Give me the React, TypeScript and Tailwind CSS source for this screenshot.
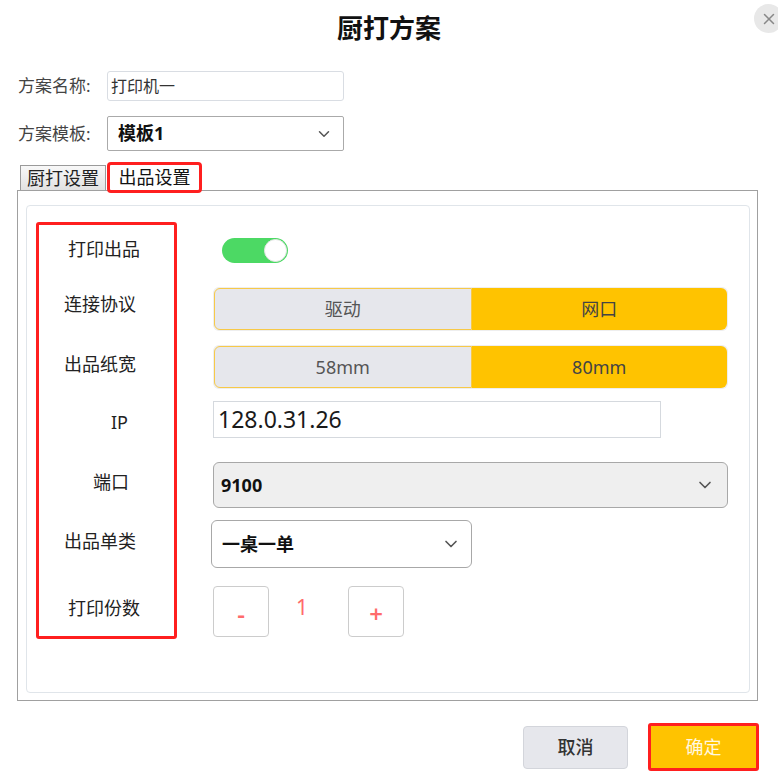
import React, { useState } from 'react';
import { ChevronDown, X } from 'lucide-react';

const font = { fontFamily: '"Noto Sans", "Noto Sans CJK SC", sans-serif' };

// label rows inside the red box: top margin and left offset
const labels = [
  { text: '打印出品', mt: 'mt-[12px]', pl: 'pl-[29px]' },
  { text: '连接协议', mt: 'mt-[31px]', pl: 'pl-[25px]' },
  { text: '出品纸宽', mt: 'mt-[36px]', pl: 'pl-[25px]' },
  { text: 'IP', mt: 'mt-[34px]', pl: 'pl-[72px]' },
  { text: '端口', mt: 'mt-[36px]', pl: 'pl-[54px]' },
  { text: '出品单类', mt: 'mt-[35px]', pl: 'pl-[25px]' },
  { text: '打印份数', mt: 'mt-[43px]', pl: 'pl-[29px]' },
];

function Segmented({ left, right, value, onChange, className = '' }: {
  left: string;
  right: string;
  value: string;
  onChange: (v: string) => void;
  className?: string;
}) {
  return (
    <div className={`flex w-[515px] h-[44px] bg-[#eeeeee] p-[1px] rounded-[6px] ${className}`}>
      {[left, right].map((opt, i) => (
        <button
          key={opt}
          type="button"
          onClick={() => onChange(opt)}
          className={`flex-1 flex items-center justify-center text-[18px] ${
            i === 0 ? 'rounded-l-[6px]' : 'rounded-r-[6px]'
          } ${
            value === opt
              ? 'bg-[#ffc300] text-[#444]'
              : 'bg-[#e6e7ec] text-[#555] border border-[#f7c948]'
          }`}
        >
          {opt}
        </button>
      ))}
    </div>
  );
}

export default function App() {
  const [enabled, setEnabled] = useState(true);
  const [protocol, setProtocol] = useState('网口');
  const [width, setWidth] = useState('80mm');
  const [count, setCount] = useState(1);

  return (
    <div className="relative w-[778px] h-[783px] bg-white overflow-hidden text-[#333]" style={font}>
      {/* Header */}
      <div className="h-[56px] flex items-center justify-center">
        <h1 className="text-[26px] font-bold text-[#111]">厨打方案</h1>
      </div>
      <button
        type="button"
        className="absolute top-[4px] right-[-5px] w-[29px] h-[29px] rounded-full bg-[#e8e8e8] flex items-center justify-center text-[#888]"
        aria-label="close"
      >
        <X size={18} strokeWidth={2} />
      </button>

      {/* Scheme fields */}
      <div className="mt-[15px] pl-[18px] flex items-center">
        <span className="w-[89px] text-[17px] text-[#444]">方案名称:</span>
        <div className="w-[237px] h-[30px] border border-[#d9dde3] rounded-[3px] flex items-center px-[3px] text-[16px] text-[#333]">
          打印机一
        </div>
      </div>
      <div className="mt-[15px] pl-[18px] flex items-center">
        <span className="w-[89px] text-[17px] text-[#444] pt-[1px]">方案模板:</span>
        <div className="w-[237px] h-[35px] border border-[#aaaaaa] rounded-[2px] flex items-center justify-between pl-[10px] pr-[10px]">
          <span className="text-[18px] font-bold text-[#111]">模板1</span>
          <ChevronDown size={18} strokeWidth={2} className="text-[#555]" />
        </div>
      </div>

      {/* Tabs */}
      <div className="mt-[11px] h-[28px] pl-[20px] flex items-start">
        <div className="mt-[3px] h-[25px] w-[86px] border border-[#9a9a9a] border-b-0 bg-gradient-to-b from-[#f8f8f8] to-[#e2e2e2] flex items-center justify-center text-[18px] text-[#222]">
          厨打设置
        </div>
        <div className="relative z-10 ml-[1px] h-[31px] w-[95px] border-[3px] border-[#ff1f1f] rounded-[4px] bg-white flex items-center justify-center text-[18px] text-[#111]">
          出品设置
        </div>
      </div>

      {/* Panel */}
      <div className="ml-[17px] w-[741px] h-[511px] border border-[#a0a0a0] pt-[14px] pl-[8px] pr-[7px] pb-[7px] flex">
        <div className="flex-1 border border-[#e0e5ea] rounded-[4px] pt-[16px] pl-[9px] flex items-start">
          {/* Labels */}
          <div className="w-[141px] h-[417px] border-[3px] border-[#ff1f1f] rounded-[3px] flex flex-col">
            {labels.map((l) => (
              <span key={l.text} className={`${l.mt} ${l.pl} text-[18px] leading-[24px] text-[#222]`}>
                {l.text}
              </span>
            ))}
          </div>

          {/* Controls */}
          <div className="ml-[36px] flex flex-col">
            <button
              type="button"
              onClick={() => setEnabled(!enabled)}
              className={`mt-[16px] ml-[9px] w-[66px] h-[25px] rounded-full p-[1px] flex items-center ${
                enabled ? 'bg-[#4cd964] justify-end' : 'bg-[#dddddd] justify-start'
              }`}
            >
              <span className="w-[23px] h-[23px] rounded-full bg-white border border-[#e5e5e5]" />
            </button>

            <Segmented left="驱动" right="网口" value={protocol} onChange={setProtocol} className="mt-[24px]" />
            <Segmented left="58mm" right="80mm" value={width} onChange={setWidth} className="mt-[14px]" />

            <div className="mt-[12px] w-[448px] h-[37px] border border-[#d5d9de] flex items-center pl-[4px] text-[23px] text-[#1a1a1a]">
              128.0.31.26
            </div>

            <div className="mt-[24px] w-[515px] h-[46px] border border-[#a8a8a8] rounded-[6px] bg-[#efefef] flex items-center justify-between pl-[7px] pr-[12px]">
              <span className="text-[18px] font-bold text-[#111]">9100</span>
              <ChevronDown size={20} strokeWidth={2} className="text-[#555]" />
            </div>

            <div className="mt-[12px] -ml-[2px] w-[261px] h-[48px] border border-[#a8a8a8] rounded-[6px] bg-white flex items-center justify-between pl-[10px] pr-[10px]">
              <span className="text-[18px] font-semibold text-[#111]">一桌一单</span>
              <ChevronDown size={20} strokeWidth={2} className="text-[#555]" />
            </div>

            <div className="mt-[18px] flex items-start">
              <button
                type="button"
                onClick={() => setCount(Math.max(1, count - 1))}
                className="w-[56px] h-[51px] border border-[#cccccc] rounded-[4px] flex items-center justify-center text-[24px] font-semibold text-[#ff6b6b] pt-[4px]"
              >
                -
              </button>
              <span className="ml-[27px] mt-[7px] w-[12px] text-[21px] leading-[28px] text-[#ff6b6b] text-center">
                {count}
              </span>
              <button
                type="button"
                onClick={() => setCount(count + 1)}
                className="ml-[40px] w-[56px] h-[51px] border border-[#cccccc] rounded-[4px] flex items-center justify-center text-[24px] font-semibold text-[#ff6b6b] pt-[4px]"
              >
                +
              </button>
            </div>
          </div>
        </div>
      </div>

      {/* Footer */}
      <div className="mt-[22px] pr-[19px] flex items-center justify-end gap-[20px]">
        <button
          type="button"
          className="w-[105px] h-[43px] bg-[#e6e7ec] border border-[#d3d5db] rounded-[4px] text-[18px] font-medium text-[#333]"
        >
          取消
        </button>
        <button
          type="button"
          className="w-[111px] h-[48px] border-[3px] border-[#ff1f1f] rounded-[3px] bg-[#ffc300] text-[18px] text-[#fff8e0]"
        >
          确定
        </button>
      </div>
    </div>
  );
}
